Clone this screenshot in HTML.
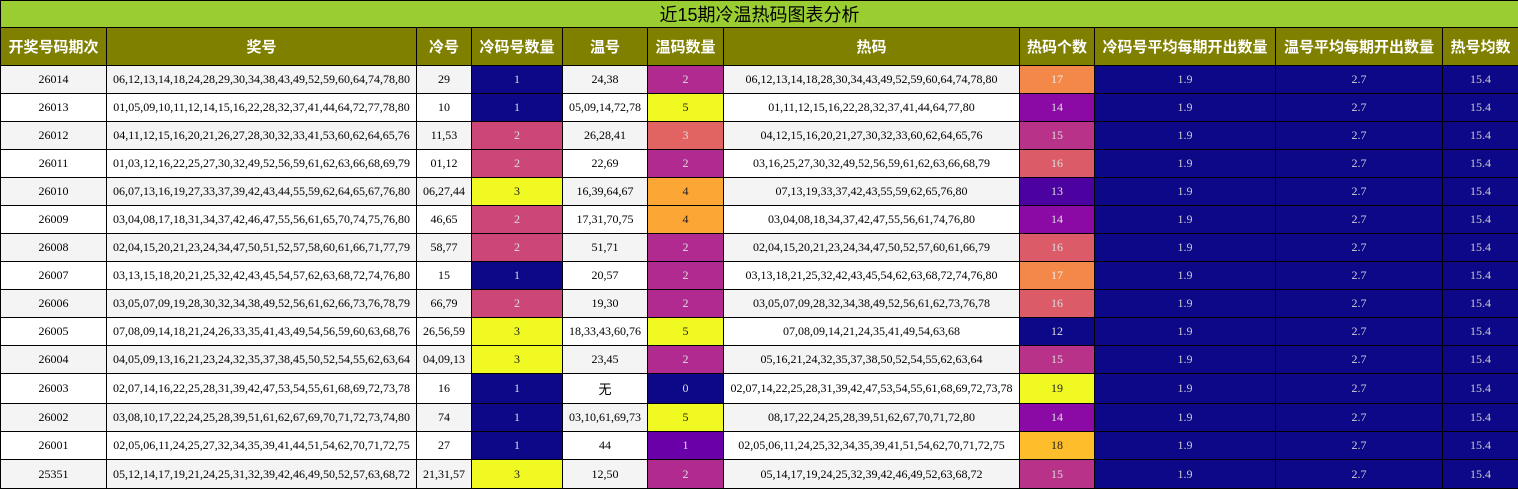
<!DOCTYPE html>
<html><head><meta charset="utf-8"><style>
body{margin:0;background:#fff;width:1518px;height:489px;overflow:hidden}
table{border-collapse:collapse;table-layout:fixed;width:1518px;font-family:"Liberation Serif","Noto Serif CJK SC",serif;font-size:12px}
td,th{border:1px solid #000;text-align:center;padding:0;white-space:nowrap;overflow:hidden}
.t{background:#9acd32;height:26px;font-family:"Liberation Sans","Noto Sans CJK SC",sans-serif;font-size:18px;font-weight:normal;color:#000}
.h th{background:#808000;color:#fff;height:37px;font-family:"Liberation Sans","Noto Sans CJK SC",sans-serif;font-size:15px;font-weight:bold}
tr.r td{height:27px}
tr.r:nth-child(odd) td{background:#f4f4f4}
tr.r:nth-child(even) td{background:#fff}
tr.r td.a{background:#0d0887;color:#ddd}
tr.r td.b{background:#6a00a8;color:#ddd}
tr.r td.c{background:#b12a90;color:#ddd}
tr.r td.d{background:#e16462;color:#ddd}
tr.r td.e{background:#fca636;color:#222}
tr.r td.f{background:#f0f921;color:#222}
tr.r td.g{background:#cc4778;color:#ddd}
tr.r td.h13{background:#4c02a1;color:#ddd}
tr.r td.h14{background:#8b0aa5;color:#ddd}
tr.r td.h15{background:#b83289;color:#ddd}
tr.r td.h16{background:#db5c68;color:#ddd}
tr.r td.h17{background:#f48849;color:#eee}
tr.r td.h18{background:#febd2a;color:#222}
tr.r td.m{background:#0d0887;color:#ccc}
</style></head><body>
<table>
<colgroup><col style="width:106px"><col style="width:310px"><col style="width:55px"><col style="width:91px"><col style="width:85px"><col style="width:76px"><col style="width:296px"><col style="width:75px"><col style="width:181px"><col style="width:167px"><col style="width:76px"></colgroup>
<tr><th class="t" colspan="11">近15期冷温热码图表分析</th></tr>
<tr class="h"><th>开奖号码期次</th><th>奖号</th><th>冷号</th><th>冷码号数量</th><th>温号</th><th>温码数量</th><th>热码</th><th>热码个数</th><th>冷码号平均每期开出数量</th><th>温号平均每期开出数量</th><th>热号均数</th></tr>
<tr class="r"><td>26014</td><td>06,12,13,14,18,24,28,29,30,34,38,43,49,52,59,60,64,74,78,80</td><td>29</td><td class="a">1</td><td>24,38</td><td class="c">2</td><td>06,12,13,14,18,28,30,34,43,49,52,59,60,64,74,78,80</td><td class="h17">17</td><td class="m">1.9</td><td class="m">2.7</td><td class="m">15.4</td></tr>
<tr class="r"><td>26013</td><td>01,05,09,10,11,12,14,15,16,22,28,32,37,41,44,64,72,77,78,80</td><td>10</td><td class="a">1</td><td>05,09,14,72,78</td><td class="f">5</td><td>01,11,12,15,16,22,28,32,37,41,44,64,77,80</td><td class="h14">14</td><td class="m">1.9</td><td class="m">2.7</td><td class="m">15.4</td></tr>
<tr class="r"><td>26012</td><td>04,11,12,15,16,20,21,26,27,28,30,32,33,41,53,60,62,64,65,76</td><td>11,53</td><td class="g">2</td><td>26,28,41</td><td class="d">3</td><td>04,12,15,16,20,21,27,30,32,33,60,62,64,65,76</td><td class="h15">15</td><td class="m">1.9</td><td class="m">2.7</td><td class="m">15.4</td></tr>
<tr class="r"><td>26011</td><td>01,03,12,16,22,25,27,30,32,49,52,56,59,61,62,63,66,68,69,79</td><td>01,12</td><td class="g">2</td><td>22,69</td><td class="c">2</td><td>03,16,25,27,30,32,49,52,56,59,61,62,63,66,68,79</td><td class="h16">16</td><td class="m">1.9</td><td class="m">2.7</td><td class="m">15.4</td></tr>
<tr class="r"><td>26010</td><td>06,07,13,16,19,27,33,37,39,42,43,44,55,59,62,64,65,67,76,80</td><td>06,27,44</td><td class="f">3</td><td>16,39,64,67</td><td class="e">4</td><td>07,13,19,33,37,42,43,55,59,62,65,76,80</td><td class="h13">13</td><td class="m">1.9</td><td class="m">2.7</td><td class="m">15.4</td></tr>
<tr class="r"><td>26009</td><td>03,04,08,17,18,31,34,37,42,46,47,55,56,61,65,70,74,75,76,80</td><td>46,65</td><td class="g">2</td><td>17,31,70,75</td><td class="e">4</td><td>03,04,08,18,34,37,42,47,55,56,61,74,76,80</td><td class="h14">14</td><td class="m">1.9</td><td class="m">2.7</td><td class="m">15.4</td></tr>
<tr class="r"><td>26008</td><td>02,04,15,20,21,23,24,34,47,50,51,52,57,58,60,61,66,71,77,79</td><td>58,77</td><td class="g">2</td><td>51,71</td><td class="c">2</td><td>02,04,15,20,21,23,24,34,47,50,52,57,60,61,66,79</td><td class="h16">16</td><td class="m">1.9</td><td class="m">2.7</td><td class="m">15.4</td></tr>
<tr class="r"><td>26007</td><td>03,13,15,18,20,21,25,32,42,43,45,54,57,62,63,68,72,74,76,80</td><td>15</td><td class="a">1</td><td>20,57</td><td class="c">2</td><td>03,13,18,21,25,32,42,43,45,54,62,63,68,72,74,76,80</td><td class="h17">17</td><td class="m">1.9</td><td class="m">2.7</td><td class="m">15.4</td></tr>
<tr class="r"><td>26006</td><td>03,05,07,09,19,28,30,32,34,38,49,52,56,61,62,66,73,76,78,79</td><td>66,79</td><td class="g">2</td><td>19,30</td><td class="c">2</td><td>03,05,07,09,28,32,34,38,49,52,56,61,62,73,76,78</td><td class="h16">16</td><td class="m">1.9</td><td class="m">2.7</td><td class="m">15.4</td></tr>
<tr class="r"><td>26005</td><td>07,08,09,14,18,21,24,26,33,35,41,43,49,54,56,59,60,63,68,76</td><td>26,56,59</td><td class="f">3</td><td>18,33,43,60,76</td><td class="f">5</td><td>07,08,09,14,21,24,35,41,49,54,63,68</td><td class="a">12</td><td class="m">1.9</td><td class="m">2.7</td><td class="m">15.4</td></tr>
<tr class="r"><td>26004</td><td>04,05,09,13,16,21,23,24,32,35,37,38,45,50,52,54,55,62,63,64</td><td>04,09,13</td><td class="f">3</td><td>23,45</td><td class="c">2</td><td>05,16,21,24,32,35,37,38,50,52,54,55,62,63,64</td><td class="h15">15</td><td class="m">1.9</td><td class="m">2.7</td><td class="m">15.4</td></tr>
<tr class="r"><td style="height:29px">26003</td><td>02,07,14,16,22,25,28,31,39,42,47,53,54,55,61,68,69,72,73,78</td><td>16</td><td class="a">1</td><td style="font-family:'Noto Sans CJK SC',sans-serif;font-size:13px">无</td><td class="a">0</td><td>02,07,14,22,25,28,31,39,42,47,53,54,55,61,68,69,72,73,78</td><td class="f">19</td><td class="m">1.9</td><td class="m">2.7</td><td class="m">15.4</td></tr>
<tr class="r"><td>26002</td><td>03,08,10,17,22,24,25,28,39,51,61,62,67,69,70,71,72,73,74,80</td><td>74</td><td class="a">1</td><td>03,10,61,69,73</td><td class="f">5</td><td>08,17,22,24,25,28,39,51,62,67,70,71,72,80</td><td class="h14">14</td><td class="m">1.9</td><td class="m">2.7</td><td class="m">15.4</td></tr>
<tr class="r"><td>26001</td><td>02,05,06,11,24,25,27,32,34,35,39,41,44,51,54,62,70,71,72,75</td><td>27</td><td class="a">1</td><td>44</td><td class="b">1</td><td>02,05,06,11,24,25,32,34,35,39,41,51,54,62,70,71,72,75</td><td class="h18">18</td><td class="m">1.9</td><td class="m">2.7</td><td class="m">15.4</td></tr>
<tr class="r"><td style="height:28px">25351</td><td>05,12,14,17,19,21,24,25,31,32,39,42,46,49,50,52,57,63,68,72</td><td>21,31,57</td><td class="f">3</td><td>12,50</td><td class="c">2</td><td>05,14,17,19,24,25,32,39,42,46,49,52,63,68,72</td><td class="h15">15</td><td class="m">1.9</td><td class="m">2.7</td><td class="m">15.4</td></tr>
</table>
</body></html>
